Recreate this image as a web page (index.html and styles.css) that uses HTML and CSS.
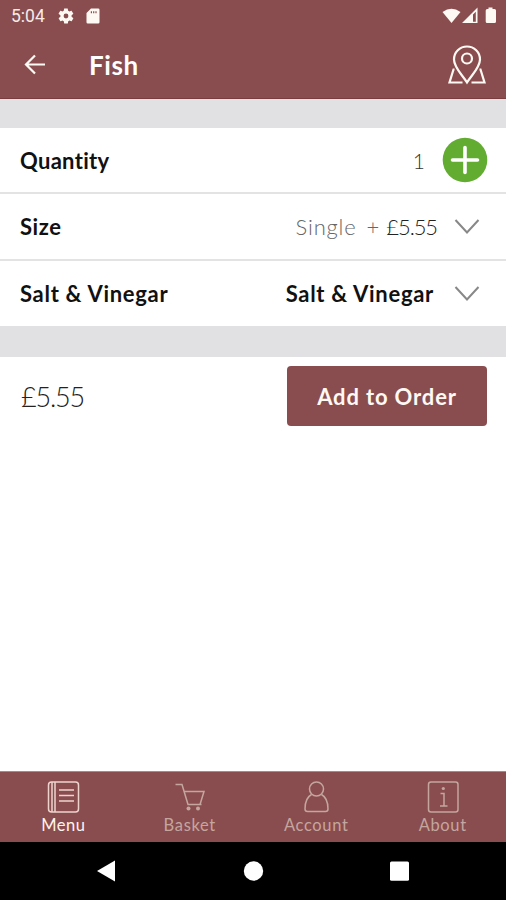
FILE: index.html
```html
<!DOCTYPE html>
<html lang="en">
<head>
<meta charset="utf-8">
<title>Fish</title>
<link rel="stylesheet" href="styles.css">
</head>
<body>
<div class="app">
  <div class="status">
    <span class="clock">5:04</span>
    <svg class="gear" width="18" height="18" viewBox="0 0 24 24"><path fill-rule="evenodd" d="M19.4 13c0-.3.1-.6.1-1s0-.7-.1-1l2.1-1.600c.2-.2.3-.4.1-.7l-2-3.400c-.1-.2-.4-.3-.6-.2l-2.500 1c-.5-.4-1.100-.7-1.700-1l-.4-2.600c0-.3-.2-.5-.5-.5h-4c-.2 0-.4.2-.5.5l-.4 2.600c-.6.2-1.100.6-1.700 1l-2.500-1c-.2-.1-.5 0-.6.2l-2 3.400c-.1.200-.1.500.1.700L4.600 11c-.1.300-.1.700-.1 1s0 .7.1 1l-2.200 1.600c-.2.200-.2.400-.1.700l2 3.400c.1.200.4.300.6.200l2.500-1c.5.400 1.100.7 1.700 1l.4 2.600c0 .3.200.5.5.5h4c.3 0 .5-.2.5-.5l.4-2.600c.6-.2 1.100-.6 1.700-1l2.500 1c.2.1.5 0 .6-.2l2-3.400c.1-.200.1-.500-.1-.7zM12 15.200a3.200 3.200 0 1 1 0-6.400 3.200 3.200 0 0 1 0 6.400z"/></svg>
    <svg class="sd" width="14" height="16" viewBox="0 0 14 16"><path fill-rule="evenodd" d="M5 .5h7.200q1.300 0 1.300 1.300v12.400q0 1.300-1.300 1.300H1.800Q.5 15.500.5 14.200V5zM4.800 3.200v2H6v-2zm2.300 0v2h1.200v-2zm2.300 0v2h1.200v-2z"/></svg>
    <svg class="signals" width="56" height="18" viewBox="0 0 56 18"><path d="M.5 5Q9.500-1.500 18.500 5L9.500 16z"/><path fill-rule="evenodd" d="M20 16L35.500.5V16zM31 7.500v7.300h2.800V4.700z"/><path d="M46.500.5h4V2h2q1.500 0 1.500 1.500v11q0 1.500-1.500 1.500h-7.300q-1.500 0-1.500-1.500v-11Q43.700 2 45.200 2h1.300z"/></svg>
  </div>
  <header class="header">
    <svg class="back" width="22" height="22" viewBox="0 0 22 22"><path d="M21 10.500H2M11 1.500L2 10.500l9 9"/></svg>
    <h1 class="title">Fish</h1>
    <svg class="map" width="40" height="40" viewBox="0 0 40 40"><path d="M20 37.500C15 29.500 7 22.500 7 14.500a13 13 0 0 1 26 0c0 8-8 15-13 23z"/><circle cx="20" cy="13.500" r="5"/><path d="M7.500 24.500h-1L2.500 37.500H15.500M32.500 24.500h1l4 13H24.500"/></svg>
  </header>
  <div class="gap"></div>
  <main class="options">
    <div class="row">
      <span class="label quantity">Quantity</span><span class="count">1</span>
      <svg class="plus" width="46" height="46" viewBox="0 0 46 46"><circle cx="23" cy="23" r="22.300"/><path d="M23 10.500v25M10.500 23h25"/></svg>
    </div>
    <div class="row">
      <span class="label size">Size</span><span class="choice">Single</span><span class="sign">+</span><span class="extra">£5.55</span>
      <svg class="chevron" width="26" height="18" viewBox="0 0 26 18"><path d="M1.500 2L13 14.500 24.500 2"/></svg>
    </div>
    <div class="row">
      <span class="label">Salt &amp; Vinegar</span><span class="label picked">Salt &amp; Vinegar</span>
      <svg class="chevron" width="26" height="18" viewBox="0 0 26 18"><path d="M1.500 2L13 14.500 24.500 2"/></svg>
    </div>
  </main>
  <div class="gap lower"></div>
  <div class="order">
    <span class="total">£5.55</span>
    <button class="add">Add to Order</button>
  </div>
  <nav class="tabs">
    <div class="tab active"><svg width="34" height="34" viewBox="0 0 34 34"><rect x="2.500" y="2" width="30" height="30" rx="3"/><path d="M6 2v30M9 2v30M13 10h15M13 15.500h15M13 21h15"/></svg><span class="t-menu">Menu</span></div>
    <div class="tab"><svg width="34" height="34" viewBox="0 0 34 34"><path d="M2.500 4.500h6.500l6 20h13.500M11 11.500h20l-4 13"/><circle class="dot" cx="15.500" cy="28.500" r="2"/><circle class="dot" cx="25" cy="28.500" r="2"/></svg><span class="t-basket">Basket</span></div>
    <div class="tab"><svg width="34" height="34" viewBox="0 0 34 34"><circle cx="17.500" cy="9" r="7"/><path d="M12.500 14.500C7 17.500 6 22.500 6 29q0 2.500 2.500 2.500h18q2.500 0 2.500-2.500c0-6.500-1-11.500-6.500-14.500"/></svg><span class="t-account">Account</span></div>
    <div class="tab"><svg width="34" height="34" viewBox="0 0 34 34"><rect x="2.500" y="2" width="29.500" height="30" rx="2.500"/><path d="M14.500 13.500H18V26M14 26h7.500"/><circle class="dot" cx="17.300" cy="8.500" r="1.600"/></svg><span class="t-about">About</span></div>
  </nav>
  <div class="system">
    <svg width="22" height="24" viewBox="0 0 22 24"><path d="M2 12L20 1.500v21z"/></svg>
    <svg width="22" height="24" viewBox="0 0 22 24"><circle cx="11.500" cy="12" r="9.700"/></svg>
    <svg width="22" height="24" viewBox="0 0 22 24"><rect x="1" y="2.500" width="19" height="19.300" rx="1.500"/></svg>
  </div>
</div>
</body>
</html>
```
FILE: styles.css
```css
* { box-sizing: border-box; }
body { margin: 0; font-family: Lato, "Liberation Sans", sans-serif; font-variant-ligatures: none; color: #111; background: #fff; }
svg { flex: none; display: block; }
.app { height: 900px; display: flex; flex-direction: column; }
.status { height: 32px; background: #894d4f; display: flex; align-items: center; padding: 0 8px 0 11px; color: #f8ebe7; fill: #fff9f3; }
.clock { font: 400 17.500px Roboto, sans-serif; width: 46px; }
.sd { margin-left: 11px; }
.signals { margin-left: auto; }
.header { height: 67px; background: #894d4f; border-bottom: 1px solid #7b3c40; display: flex; align-items: center; padding: 0 19px 0 24px; fill: none; stroke: #fff9f3; stroke-width: 2.200; }
.title { margin: 0 auto 0 43px; font-size: 26px; line-height: 32px; font-weight: 700; color: #fff; letter-spacing: .6px; padding-bottom: 1px; }
.gap { height: 29px; background: #e1e1e3; }
.lower { height: 31px; }
.options { display: flex; flex-direction: column; }
.row { height: 66px; border-bottom: 2px solid #e3e3e3; display: flex; align-items: center; padding: 0 25px 0 20px; font-size: 22px; }
.row:nth-child(2) { height: 67px; }
.row:last-child { height: 65px; border-bottom: 0; }
.row:first-child { padding-right: 18px; }
.label { font-weight: 700; white-space: nowrap; letter-spacing: .7px; }
.label:first-child { margin-right: auto; }
.quantity { letter-spacing: .3px; }
.size { letter-spacing: .6px; }
.count { font-weight: 300; font-size: 21px; color: #333; margin-right: 17px; }
.plus circle { fill: #62ac31; }
.plus path { stroke: #fff; stroke-width: 3.600; stroke-linecap: round; }
.choice { font-weight: 300; color: #666; letter-spacing: .8px; margin-right: 10px; }
.sign { font-weight: 300; color: #666; margin-right: 7px; }
.extra { font-weight: 300; color: #222; letter-spacing: -1.100px; }
.chevron { margin-left: 17px; margin-right: 1px; fill: none; stroke: #888; stroke-width: 2; }
.picked + .chevron { margin-left: 20px; }
.order { height: 78px; display: flex; align-items: center; justify-content: space-between; padding: 0 19px 0 21px; }
.total { font-size: 27px; font-weight: 300; color: #222; letter-spacing: -1.200px; }
.add { width: 200px; height: 60px; border: 0; border-radius: 4px; background: #894d4f; color: #fff8f3; font: 700 22px Lato, sans-serif; letter-spacing: .85px; padding: 0; }
.tabs { margin-top: auto; height: 71px; background: #894d4f; border-top: 1px solid #a98889; display: grid; grid-template-columns: repeat(4, 1fr); }
.tab { display: flex; flex-direction: column; align-items: center; padding-top: 8px; color: #c4a69f; font-size: 16.500px; line-height: 23px; fill: none; stroke: #c4a69f; stroke-width: 1.500; }
.tab.active { color: #fff3ee; stroke: #eed3cd; }
.tab span { letter-spacing: .65px; }
.tab .t-menu { letter-spacing: .5px; }
.dot { fill: #c4a69f; stroke: none; }
.system { height: 58px; background: #000; display: flex; align-items: center; justify-content: center; gap: 125px; fill: #fff; }
```
